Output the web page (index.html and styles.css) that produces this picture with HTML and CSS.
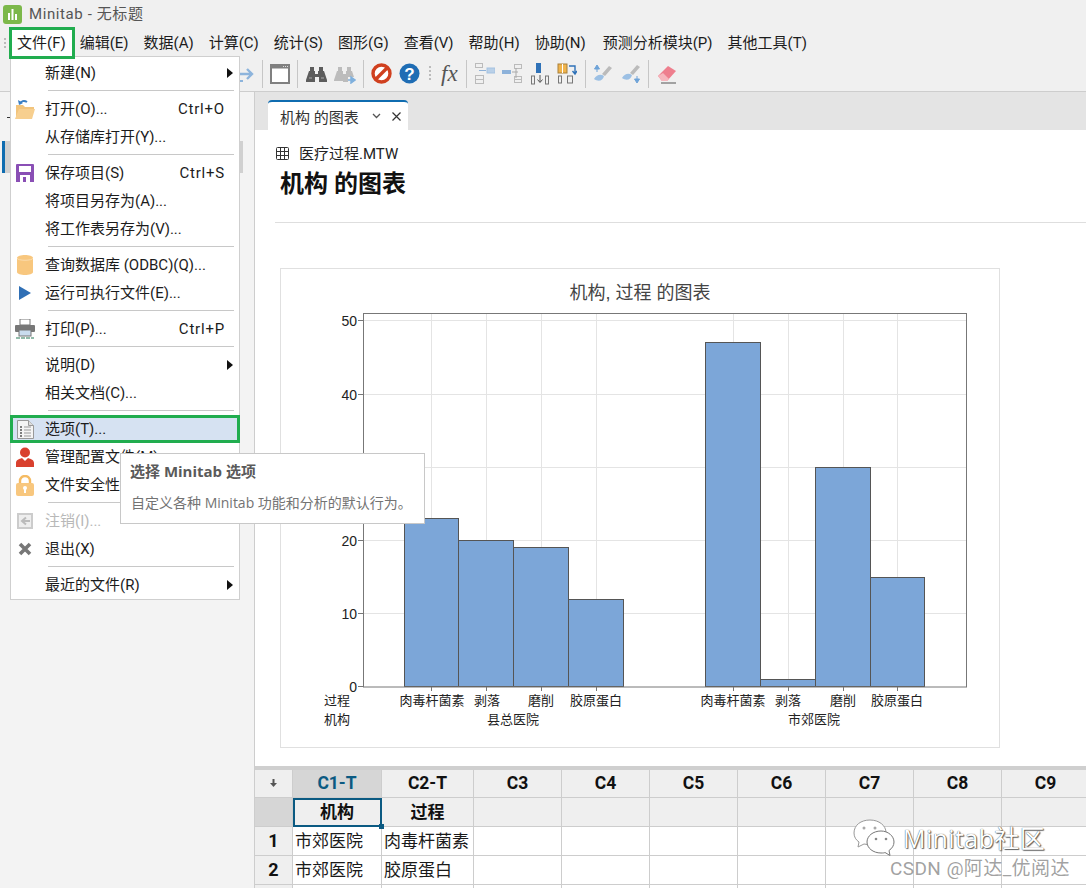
FILE: index.html
```html
<!DOCTYPE html>
<html lang="zh-CN">
<head>
    <meta charset="UTF-8">
    <meta name="viewport" content="width=device-width, initial-scale=1.0">
    <title>Minitab - 无标题</title>
    <link rel="stylesheet" href="styles.css">
</head>
<body>
    <div class="app">
        <div class="titlebar">
            <svg class="logo" width="19" height="19" viewBox="0 0 19 19">
                <rect width="19" height="19" rx="3" fill="#7cb84a"/>
                <path d="M5 8h2v7H5zM8.500 4h2v11h-2zM12 9h2v6h-2z" fill="#fff"/>
            </svg>
            <span class="app-name">Minitab - 无标题</span>
        </div>

        <div class="menubar">
            <span class="grip"></span>
            <span class="menu-title menu-title-open">文件(F)</span>
            <span class="menu-title">编辑(E)</span>
            <span class="menu-title">数据(A)</span>
            <span class="menu-title">计算(C)</span>
            <span class="menu-title">统计(S)</span>
            <span class="menu-title">图形(G)</span>
            <span class="menu-title">查看(V)</span>
            <span class="menu-title">帮助(H)</span>
            <span class="menu-title menu-title-wide">协助(N)</span>
            <span class="menu-title">预测分析模块(P)</span>
            <span class="menu-title">其他工具(T)</span>
        </div>

        <div class="toolbar">
            <svg width="15" height="20" viewBox="0 0 15 20"><path d="M0 10h11M7 5l5 5-5 5" fill="none" stroke="#8db4dc" stroke-width="2.400"/><path d="M0 17h3" stroke="#8db4dc" stroke-width="2"/></svg>
            <span class="tb-sep"></span>
            <svg width="20" height="20" viewBox="0 0 20 20"><rect x="1" y="1" width="18" height="18" fill="#fff" stroke="#808080" stroke-width="2"/><rect x="1" y="1" width="18" height="3.500" fill="#808080"/><path d="M13 2.500h1M15 2.500h1M17 2.500h1" stroke="#ddd"/></svg>
            <span class="tb-sep"></span>
            <svg class="tb-gap" width="21" height="20" viewBox="0 0 21 20"><g fill="#5c5c5c"><path d="M4 3h4v4H4zM13 3h4v4h-4z"/><path d="M3 7h6v3h3V7h6l3 9v2h-8v-5H9v5H0v-2z"/></g><path d="M3 14h3M15 14h3" stroke="#aaa"/></svg>
            <svg width="22" height="20" viewBox="0 0 22 20"><g fill="#bcbcbc"><path d="M4 3h4v4H4zM13 3h4v4h-4z"/><path d="M3 7h6v3h3V7h6l2 6h-6v5H9v-1H0v-1z"/></g><path d="M14 16h5M17 13l4 3-4 3z" fill="#7fb0dd" stroke="#7fb0dd" stroke-width="1.500"/></svg>
            <span class="tb-sep"></span>
            <svg width="21" height="21" viewBox="0 0 21 21"><circle cx="10.500" cy="10.500" r="8.500" fill="#fff" stroke="#d0401f" stroke-width="3.400"/><path d="M5 16L16 5" stroke="#d0401f" stroke-width="3.400"/></svg>
            <svg width="21" height="21" viewBox="0 0 21 21"><circle cx="10.500" cy="10.500" r="10" fill="#1f6db4"/><text x="10.500" y="16.500" class="help-mark">?</text></svg>
            <span class="tb-dots"></span>
            <span class="fx">fx</span>
            <span class="tb-sep"></span>
            <svg class="tb-gap" width="20" height="22" viewBox="0 0 20 22"><g fill="none" stroke="#bbb"><rect x=".5" y=".5" width="7" height="4"/><rect x=".5" y="12.500" width="8" height="8"/><path d="M1 16.500h7"/></g><rect x="12" y="5" width="8" height="5" fill="#b9d0e8" stroke="#a5c2e0"/><path d="M4 7.500h7" stroke="#8fb2d8"/></svg>
            <svg width="20" height="22" viewBox="0 0 20 22"><rect y="7" width="9" height="4" fill="#8db2da"/><g fill="none" stroke="#bbb"><rect x="12.500" y="1.500" width="7" height="4"/><rect x="12.500" y="13.500" width="7" height="6"/><path d="M13 16.500h6"/></g><path d="M10 9h6M14 5v10" stroke="#aaa"/></svg>
            <svg class="tb-gap" width="20" height="22" viewBox="0 0 20 22"><rect x="6" y="0" width="5" height="10" fill="#2f72b8"/><g fill="none" stroke="#777"><rect x="1.500" y="13" width="3" height="8"/><rect x="15.500" y="13" width="3" height="8"/></g><path d="M10 12v7M7.500 16.500l2.500 3 2.500-3" fill="none" stroke="#555"/></svg>
            <svg width="20" height="22" viewBox="0 0 20 22"><rect x="1" y="1" width="9" height="9" fill="#f0b44c" stroke="#a9803a"/><path d="M5.500 1v9" stroke="#fff"/><g fill="none" stroke="#777"><rect x="1.500" y="13" width="3" height="7"/><rect x="10.500" y="13" width="5" height="7"/></g><path d="M12 3h6v7M15.500 8l2.500 3 2-3" fill="none" stroke="#2f72b8" stroke-width="1.400"/></svg>
            <span class="tb-sep tb-gap"></span>
            <svg width="20" height="21" viewBox="0 0 20 21"><path d="M1 16c3-5 7-5 10-3-1 5-6 6-10 3z" fill="#9cc0e4"/><path d="M9 11l7-8 3 2-7 8z" fill="#bbb"/><path d="M4 9V5M1.500 6L4 2l2.500 4z" fill="#6ea3d8" stroke="#6ea3d8"/></svg>
            <svg class="tb-gap" width="20" height="21" viewBox="0 0 20 21"><path d="M1 15c3-5 7-5 10-3-1 5-6 6-10 3z" fill="#9cc0e4"/><path d="M9 10l7-8 3 2-7 8z" fill="#bbb"/><path d="M16 13v4M13.500 16l2.500 4 2.500-4z" fill="#6ea3d8" stroke="#6ea3d8"/></svg>
            <span class="tb-sep"></span>
            <svg class="tb-gap" width="20" height="20" viewBox="0 0 20 20"><path d="M1 12L11 2l8 5-9 10H5z" fill="#ee7f8e"/><path d="M1 12l4 5h5l2-2-6-6z" fill="#f6b6bd"/><path d="M4 19h15" stroke="#888" stroke-width="1.500"/></svg>
        </div>

        <div class="workspace">
            <div class="sidepanel">
                <span class="panel-mark"></span>
                <div class="panel-row"></div>
            </div>

            <div class="main">
                <div class="tabstrip">
                    <div class="tab">
                        <span class="tab-label">机构 的图表</span>
                        <svg width="9" height="6" viewBox="0 0 9 6"><path d="M1 1l3.500 3.500L8 1" fill="none" stroke="#555" stroke-width="1.300"/></svg>
                        <svg width="9" height="9" viewBox="0 0 9 9"><path d="M.5.500l8 8M8.500.500l-8 8" stroke="#333" stroke-width="1.200"/></svg>
                    </div>
                </div>

                <div class="doc">
                    <div class="file-row">
                        <svg width="13" height="13" viewBox="0 0 13 13"><path d="M.5 1.500a1 1 0 0 1 1-1h10a1 1 0 0 1 1 1v10a1 1 0 0 1-1 1h-10a1 1 0 0 1-1-1zM.5 4.500h12M.5 8.500h12M4.500.500v12M8.500.500v12" fill="none" stroke="#333"/></svg>
                        <span>医疗过程.MTW</span>
                    </div>
                    <h1 class="doc-title">机构 的图表</h1>
                    <div class="doc-rule"></div>

                    <div class="chart-panel">
                        <svg class="chart" width="718" height="478" viewBox="281 269 718 478">
                            <text x="640" y="299" class="chart-title">机构, 过程 的图表</text>

                            <g class="grid-lines">
                                <path d="M363 320.500H966M363 394.500H966M363 467.500H966M363 540.500H966M363 613.500H966"/>
                                <path d="M431.500 313V687M486.500 313V687M541.500 313V687M596.500 313V687M733.500 313V687M788.500 313V687M843.500 313V687M897.500 313V687"/>
                            </g>

                            <g class="bars">
                                <rect x="404.500" y="518.500" width="54" height="168"/>
                                <rect x="458.500" y="540.500" width="55" height="146"/>
                                <rect x="513.500" y="547.500" width="55" height="139"/>
                                <rect x="568.500" y="599.500" width="55" height="87"/>
                                <rect x="705.500" y="342.500" width="55" height="344"/>
                                <rect x="760.500" y="679.500" width="55" height="7"/>
                                <rect x="815.500" y="467.500" width="55" height="219"/>
                                <rect x="870.500" y="577.500" width="54" height="109"/>
                            </g>

                            <rect x="363.500" y="313.500" width="603" height="373.500" class="plot-frame"/>
                            <path class="ticks" d="M358 320.500h5M358 394.500h5M358 467.500h5M358 540.500h5M358 613.500h5M358 686.500h5M431.500 687v4M486.500 687v4M541.500 687v4M596.500 687v4M733.500 687v4M788.500 687v4M843.500 687v4M897.500 687v4"/>

                            <g class="y-labels">
                                <text x="357" y="326">50</text>
                                <text x="357" y="400">40</text>
                                <text x="357" y="546">20</text>
                                <text x="357" y="619">10</text>
                                <text x="357" y="692">0</text>
                            </g>

                            <g class="x-labels">
                                <text x="337" y="705">过程</text>
                                <text x="337" y="724">机构</text>
                                <text x="432" y="705">肉毒杆菌素</text>
                                <text x="487" y="705">剥落</text>
                                <text x="541" y="705">磨削</text>
                                <text x="596" y="705">胶原蛋白</text>
                                <text x="513" y="724">县总医院</text>
                                <text x="733" y="705">肉毒杆菌素</text>
                                <text x="788" y="705">剥落</text>
                                <text x="843" y="705">磨削</text>
                                <text x="897" y="705">胶原蛋白</text>
                                <text x="814" y="724">市郊医院</text>
                            </g>
                        </svg>
                    </div>
                </div>

                <div class="sheet-wrap">
                    <table class="sheet">
                        <colgroup>
                            <col class="col-index"><col class="col-c1"><col class="col-c2">
                            <col><col><col><col><col><col><col>
                        </colgroup>
                        <tr class="row-head">
                            <th class="corner">
                                <svg width="7" height="8" viewBox="0 0 7 8"><path d="M2.500 0h2v4H7L3.500 8 0 4h2.500z" fill="#555"/></svg>
                            </th>
                            <th class="col-active">C1-T</th><th>C2-T</th><th>C3</th><th>C4</th><th>C5</th><th>C6</th><th>C7</th><th>C8</th><th>C9</th>
                        </tr>
                        <tr class="row-name">
                            <th class="index-blank"></th>
                            <th class="cell-active">机构<span class="cell-handle"></span></th><th>过程</th><th></th><th></th><th></th><th></th><th></th><th></th><th></th>
                        </tr>
                        <tr>
                            <th class="index">1</th>
                            <td>市郊医院</td><td>肉毒杆菌素</td><td></td><td></td><td></td><td></td><td></td><td></td><td></td>
                        </tr>
                        <tr>
                            <th class="index">2</th>
                            <td>市郊医院</td><td>胶原蛋白</td><td></td><td></td><td></td><td></td><td></td><td></td><td></td>
                        </tr>
                        <tr>
                            <th class="index"></th>
                            <td></td><td></td><td></td><td></td><td></td><td></td><td></td><td></td><td></td>
                        </tr>
                    </table>
                </div>
            </div>
        </div>

        <div class="filemenu">
            <div class="item has-sub"><span class="item-icon"></span><span class="item-label">新建(N)</span><span class="arrow"></span></div>
            <div class="sep"></div>
            <div class="item">
                <span class="item-icon"><svg width="22" height="22" viewBox="0 0 22 22"><path d="M2 7h7l2 2h9v3H6l-4 9z" fill="#f2c47c"/><path d="M1 21l4-10h16l-3 10z" fill="#f7cf8f"/><path d="M6 6c1-3 4-4 7-2" fill="none" stroke="#3b7fc4" stroke-width="2"/><path d="M4 2l1 5 4-2z" fill="#3b7fc4"/></svg></span>
                <span class="item-label">打开(O)...</span><span class="shortcut">Ctrl+O</span>
            </div>
            <div class="item"><span class="item-icon"></span><span class="item-label">从存储库打开(Y)...</span></div>
            <div class="sep"></div>
            <div class="item">
                <span class="item-icon"><svg width="20" height="20" viewBox="0 0 20 20"><path d="M1 2a1 1 0 0 1 1-1h16a1 1 0 0 1 1 1v17H1z" fill="#8a4fb5"/><rect x="4" y="3" width="12" height="6" fill="#fff"/><rect x="5" y="12" width="10" height="7" fill="#fff"/><rect x="8" y="14" width="3" height="5" fill="#8a4fb5"/></svg></span>
                <span class="item-label">保存项目(S)</span><span class="shortcut">Ctrl+S</span>
            </div>
            <div class="item"><span class="item-icon"></span><span class="item-label">将项目另存为(A)...</span></div>
            <div class="item"><span class="item-icon"></span><span class="item-label">将工作表另存为(V)...</span></div>
            <div class="sep"></div>
            <div class="item">
                <span class="item-icon"><svg width="16" height="20" viewBox="0 0 16 20"><path d="M0 3c0-4 16-4 16 0v14c0 4-16 4-16 0z" fill="#f8c77e"/><path d="M0 3c0 3 16 3 16 0" fill="none" stroke="#fbdcae"/></svg></span>
                <span class="item-label">查询数据库 (ODBC)(Q)...</span>
            </div>
            <div class="item">
                <span class="item-icon"><svg width="12" height="14" viewBox="0 0 12 14"><path d="M0 0l12 7-12 7z" fill="#2f6fb5"/></svg></span>
                <span class="item-label">运行可执行文件(E)...</span>
            </div>
            <div class="sep"></div>
            <div class="item">
                <span class="item-icon"><svg width="20" height="20" viewBox="0 0 20 20"><rect x="5" y="0" width="10" height="6" fill="#fff" stroke="#777"/><rect y="6" width="20" height="7" rx="1" fill="#777"/><rect x="4" y="11" width="12" height="6" fill="#c9dcee" stroke="#777"/><path d="M1 19h18" stroke="#6fa58f" stroke-width="1.500" stroke-dasharray="4 1"/></svg></span>
                <span class="item-label">打印(P)...</span><span class="shortcut">Ctrl+P</span>
            </div>
            <div class="sep"></div>
            <div class="item has-sub"><span class="item-icon"></span><span class="item-label">说明(D)</span><span class="arrow"></span></div>
            <div class="item"><span class="item-icon"></span><span class="item-label">相关文档(C)...</span></div>
            <div class="sep"></div>
            <div class="item item-hover">
                <span class="item-icon"><svg width="17" height="19" viewBox="0 0 17 19"><path d="M.5.500h11l5 5v13H.5z" fill="#f4f4f4" stroke="#999"/><path d="M11.500.500v5h5" fill="#ddd" stroke="#999"/><path d="M3 7h2M3 10h2M3 13h2M3 16h2" stroke="#555" stroke-width="1.400"/><path d="M7 7h7M7 10h7M7 13h7M7 16h7" stroke="#999"/></svg></span>
                <span class="item-label">选项(T)...</span>
            </div>
            <div class="item">
                <span class="item-icon"><svg width="18" height="20" viewBox="0 0 18 20"><circle cx="9" cy="5.500" r="5" fill="#d9402e"/><path d="M0 20v-4c0-3 3-4 6-5l3 3 3-3c3 1 6 2 6 5v4z" fill="#d9402e"/></svg></span>
                <span class="item-label">管理配置文件(M)...</span>
            </div>
            <div class="item">
                <span class="item-icon"><svg width="18" height="21" viewBox="0 0 18 21"><path d="M4 9V6a5 5 0 0 1 10 0v3" fill="none" stroke="#f5bb63" stroke-width="2.400"/><rect y="8" width="18" height="13" rx="2" fill="#f8c77e"/><circle cx="9" cy="13" r="2" fill="#fff"/><path d="M8 14h2v4H8z" fill="#fff"/></svg></span>
                <span class="item-label">文件安全性(F)...</span>
            </div>
            <div class="sep"></div>
            <div class="item item-disabled">
                <span class="item-icon"><svg width="16" height="16" viewBox="0 0 16 16"><path d="M1 1h14v14H1z" fill="#eee" stroke="#ccc" stroke-width="2"/><path d="M13 8H6M9 4.500L5 8l4 3.500" fill="none" stroke="#bbb" stroke-width="2"/></svg></span>
                <span class="item-label">注销(I)...</span>
            </div>
            <div class="item">
                <span class="item-icon"><svg width="14" height="14" viewBox="0 0 14 14"><path d="M2 2l10 10M12 2L2 12" stroke="#777" stroke-width="3.600"/></svg></span>
                <span class="item-label">退出(X)</span>
            </div>
            <div class="sep"></div>
            <div class="item has-sub"><span class="item-icon"></span><span class="item-label">最近的文件(R)</span><span class="arrow"></span></div>
        </div>

        <div class="tooltip">
            <div class="tooltip-title">选择 Minitab 选项</div>
            <div class="tooltip-text">自定义各种 Minitab 功能和分析的默认行为。</div>
        </div>

        <div class="watermark">
            <svg width="44" height="38" viewBox="0 0 44 38">
                <path d="M18 1C9 1 2 6 2 14c0 4 2 7 5 9l-1 5 6-3c2 .5 4 .5 6 .5 9 0 16-5 16-12S27 1 18 1z" fill="#fff" stroke="#999"/>
                <path d="M29 12c-8 0-14 5-14 11s6 11 14 11c2 0 3 0 4-.5l5 3-1-5c3-2 5-5 5-8.500 0-6-6-11-13-11z" fill="#fff" stroke="#777"/>
                <circle cx="12" cy="9" r="1.500" fill="#aaa"/><circle cx="23" cy="9" r="1.500" fill="#aaa"/><circle cx="24" cy="20" r="1.300" fill="#888"/><circle cx="34" cy="20" r="1.300" fill="#888"/>
            </svg>
            <span class="wm-name">Minitab社区</span>
        </div>
        <div class="csdn-mark">CSDN @阿达_优阅达</div>
    </div>
</body>
</html>
```

FILE: styles.css
```css
* {
    margin: 0;
    padding: 0;
    box-sizing: border-box;
}

body {
    font-family: Roboto, "Noto Sans CJK SC", sans-serif;
    font-size: 15px;
    color: #1c1c1c;
    background: #f0f0f0;
    overflow: hidden;
}

.app {
    position: relative;
    width: 1086px;
    height: 888px;
    display: flex;
    flex-direction: column;
    overflow: hidden;
}

.titlebar {
    height: 28px;
    flex: none;
    display: flex;
    align-items: center;
    padding-left: 3px;
    gap: 7px;
}

.app-name {
    padding-bottom: 4px;
    color: #555;
    font-size: 15px;
    letter-spacing: 0.6px;
}

.menubar {
    height: 28px;
    flex: none;
    display: flex;
    align-items: flex-start;
    padding-left: 4px;
}

.grip {
    width: 2px;
    height: 11px;
    margin: 10px 4px 0 0;
    background: repeating-linear-gradient(#bbb 0 2px, transparent 2px 4px);
}

.menu-title {
    height: 30px;
    padding: 0 7.5px;
    white-space: nowrap;
    line-height: 30px;
}

.menu-title-open {
    position: relative;
    z-index: 3;
    padding: 0 8px 0 7px;
    margin-right: -1.500px;
    background: #fff;
    outline: 3px solid #21ad4f;
    outline-offset: -2px;
}

.menu-title-wide {
    padding-right: 9.500px;
}

.toolbar {
    height: 36px;
    flex: none;
    display: flex;
    align-items: center;
    gap: 7px;
    padding-left: 240px;
    border-bottom: 1px solid #cdcdcd;
}

.toolbar svg {
    flex: none;
}

.tb-sep {
    width: 1px;
    height: 28px;
    background: #c6c6c6;
}

.tb-gap {
    margin-left: 1px;
}

.tb-dots {
    width: 2px;
    height: 15px;
    margin-left: 2px;
    background: repeating-linear-gradient(#bbb 0 2px, transparent 2px 4px);
}

.fx {
    width: 18px;
    margin-left: 3px;
    font-family: "Liberation Serif", serif;
    font-style: italic;
    font-size: 23px;
    line-height: 24px;
    color: #555;
}

.help-mark {
    font-family: "Liberation Sans", sans-serif;
    font-size: 17px;
    font-weight: 700;
    fill: #fff;
    text-anchor: middle;
}

.workspace {
    flex: 1;
    display: flex;
    min-height: 0;
}

.sidepanel {
    width: 255px;
    flex: none;
    background: #f3f3f3;
    border-right: 1px solid #cdcdcd;
}

.panel-mark {
    display: block;
    width: 3px;
    height: 1px;
    margin: 25px 0 0 7px;
    background: #333;
}

.panel-row {
    width: 241px;
    height: 32px;
    margin: 23px 0 0 2px;
    background: #d0d0d0;
    border-left: 3px solid #0f6cb0;
}

.main {
    flex: 1;
    min-width: 0;
    display: flex;
    flex-direction: column;
    background: #fff;
}

.tabstrip {
    height: 38px;
    flex: none;
    padding: 8px 0 0 13px;
    background: #e4e4e4;
}

.tab {
    width: 140px;
    height: 30px;
    display: flex;
    align-items: center;
    padding-left: 12px;
    background: #fff;
    border-top: 2px solid #0f6cb0;
    border-radius: 4px 4px 0 0;
}

.tab-label {
    width: 92px;
    color: #333;
    font-size: 15px;
    white-space: nowrap;
}

.tab svg:last-child {
    margin-left: 11px;
}

.doc {
    flex: 1;
    padding-left: 20px;
    overflow: hidden;
}

.file-row {
    height: 20px;
    margin-top: 12px;
    padding-left: 1px;
    display: flex;
    align-items: center;
    gap: 10px;
    color: #222;
    font-size: 15px;
}

.file-row svg {
    margin-top: 2px;
}

.doc-title {
    margin: 5px 0 0 5px;
    font-size: 24px;
    line-height: 34px;
    font-weight: 700;
    color: #111;
}

.doc-rule {
    height: 1px;
    margin-top: 21px;
    background: #dedede;
}

.chart-panel {
    width: 720px;
    height: 480px;
    margin: 45px 0 0 5px;
    border: 1px solid #e0e0e0;
}

.chart {
    display: block;
    font-family: "Liberation Sans", "Noto Sans CJK SC", sans-serif;
}

.chart-title {
    font-size: 18px;
    fill: #444;
    text-anchor: middle;
}

.grid-lines {
    fill: none;
    stroke: #e4e4e4;
}

.bars rect {
    fill: #7ca6d8;
    stroke: #555;
}

.plot-frame {
    fill: none;
    stroke: #777;
}

.ticks {
    fill: none;
    stroke: #777;
}

.y-labels text {
    font-size: 14px;
    fill: #222;
    text-anchor: end;
}

.x-labels text {
    font-size: 13px;
    fill: #222;
    text-anchor: middle;
}

.sheet-wrap {
    height: 122px;
    flex: none;
    overflow: hidden;
    border-top: 4px solid #cfcfcf;
}

.sheet {
    table-layout: fixed;
    width: 835px;
    border-collapse: separate;
    border-spacing: 0;
}

.col-index {
    width: 38px;
}

.col-c1 {
    width: 89px;
}

.col-c2 {
    width: 92px;
}

.sheet th,
.sheet td {
    border-right: 1px solid #cdcdcd;
    border-bottom: 1px solid #cdcdcd;
    height: 29px;
    padding: 0;
    font-size: 17px;
    line-height: 20px;
    white-space: nowrap;
    overflow: hidden;
}

.sheet th {
    background: #efefef;
    color: #111;
    text-align: center;
    font-weight: 700;
}

.sheet td {
    padding-left: 2px;
    color: #1a1a1a;
}

.sheet .row-head th {
    height: 28px;
    padding-bottom: 2px;
    font-size: 17.500px;
}

.sheet .row-name th {
    padding-bottom: 1px;
}

.sheet .col-active {
    background: #d6d6d6;
    color: #0b5a82;
}

.sheet .corner {
    line-height: 0;
}

.sheet .index-blank {
    background: #d6d6d6;
}

.sheet .index {
    background: #efefef;
    font-size: 18px;
}

.sheet .cell-active {
    position: relative;
    overflow: visible;
    outline: 2px solid #0b5a82;
    outline-offset: -2px;
}

.cell-handle {
    position: absolute;
    right: -3px;
    bottom: -3px;
    width: 5px;
    height: 5px;
    background: #0b5a82;
}

.filemenu {
    position: absolute;
    left: 10px;
    top: 56px;
    width: 230px;
    height: 544px;
    z-index: 2;
    padding-top: 2px;
    background: #fff;
    border: 1px solid #cfcfcf;
}

.item {
    height: 28px;
    display: flex;
    align-items: center;
    padding: 0 14px 0 2px;
    white-space: nowrap;
}

.item-icon {
    width: 24px;
    height: 24px;
    margin-right: 8px;
    flex: none;
    display: flex;
    align-items: center;
    justify-content: center;
}

.item-label {
    flex: 1;
    padding-bottom: 4px;
}

.shortcut {
    margin-left: 8px;
    letter-spacing: 0.8px;
}

.arrow {
    width: 0;
    height: 0;
    margin-right: -8px;
    border-left: 6px solid #111;
    border-top: 5px solid transparent;
    border-bottom: 5px solid transparent;
}

.sep {
    height: 1px;
    margin: 3px 5px 4px 37px;
    background: #c8c8c8;
}

.item-hover {
    margin: 0 -1px;
    padding-left: 3px;
    background: #d6e2f2;
    outline: 3px solid #21ad4f;
    outline-offset: -3px;
}

.item-disabled {
    color: #b8b8b8;
}

.tooltip {
    position: absolute;
    left: 120px;
    top: 453px;
    width: 305px;
    height: 71px;
    z-index: 4;
    padding: 7px 0 0 9px;
    background: #fff;
    border: 1px solid #c8c8c8;
    white-space: nowrap;
    font-family: "Open Sans", "Noto Sans CJK SC", sans-serif;
}

.tooltip-title {
    font-size: 15px;
    font-weight: 700;
    line-height: 20px;
    color: #5a5a5a;
}

.tooltip-text {
    margin: 11px 0 0 1px;
    font-size: 14px;
    line-height: 22px;
    color: #737373;
}

.watermark {
    position: absolute;
    left: 852px;
    top: 819px;
    z-index: 5;
    display: flex;
    align-items: center;
    gap: 7px;
}

.wm-name {
    font-family: "Open Sans", "Noto Sans CJK SC", sans-serif;
    font-size: 25px;
    line-height: 38px;
    letter-spacing: 0.4px;
    color: #fff;
    text-shadow: 0 0 1px #222, 1px 1px 1px #666;
}

.csdn-mark {
    position: absolute;
    left: 890px;
    top: 856px;
    z-index: 5;
    font-size: 19px;
    line-height: 26px;
    letter-spacing: 0.4px;
    color: rgba(120, 120, 120, 0.7);
    white-space: nowrap;
}
```
